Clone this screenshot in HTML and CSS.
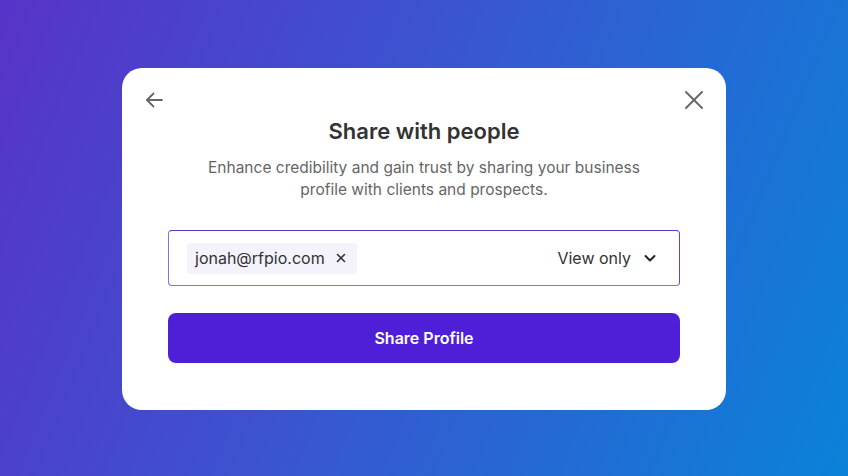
FILE: index.html
```html
<!DOCTYPE html>
<html lang="en">
<head>
    <meta charset="UTF-8">
    <meta name="viewport" content="width=device-width, initial-scale=1.0">
    <title>Share with people</title>
    <link rel="stylesheet" href="styles.css">
</head>
<body>

    <div class="stage">
        <div class="card">
            <!-- Top bar: back + close -->
            <div class="top-bar">
                <button class="icon-btn" aria-label="Back">
                    <svg width="20" height="20" viewBox="0 0 20 20" fill="none" stroke="#666" stroke-width="1.8" stroke-linecap="round" stroke-linejoin="round">
                        <path d="M18 10H3"/>
                        <path d="M9.5 3.5L3 10l6.5 6.5"/>
                    </svg>
                </button>
                <button class="icon-btn" aria-label="Close">
                    <svg width="20" height="20" viewBox="0 0 20 20" fill="none" stroke="#666" stroke-width="1.9" stroke-linecap="round">
                        <path d="M2 2l16 16"/>
                        <path d="M18 2L2 18"/>
                    </svg>
                </button>
            </div>

            <h1 class="title">Share with people</h1>
            <p class="desc">Enhance credibility and gain trust by sharing your business<br>profile with clients and prospects.</p>

            <!-- Email field -->
            <div class="email-field">
                <span class="chip">
                    jonah@rfpio.com
                    <svg class="chip-x" width="10" height="10" viewBox="0 0 10 10" stroke="#333" stroke-width="1.6" stroke-linecap="round">
                        <path d="M1.5 1.5l7 7"/>
                        <path d="M8.5 1.5l-7 7"/>
                    </svg>
                </span>
                <div class="access">
                    View only
                    <svg width="14" height="14" viewBox="0 0 14 14" fill="none" stroke="#222" stroke-width="2" stroke-linecap="round" stroke-linejoin="round">
                        <path d="M2.5 5l4.5 4.5L11.5 5"/>
                    </svg>
                </div>
            </div>

            <button class="share-btn">Share Profile</button>
        </div>
    </div>

</body>
</html>
```

FILE: styles.css
```css
body {
    font-family: Inter, "Noto Sans", Arial, sans-serif;
    margin: 0;
    padding: 0;
}

.stage {
    width: 848px;
    height: 476px;
    box-sizing: border-box;
    padding-top: 68px;
    background: linear-gradient(112deg, #5733c8 0%, #3a55d0 45%, #0a82d8 100%);
    display: flex;
    align-items: flex-start;
    justify-content: center;
}

.card {
    width: 604px;
    height: 342px;
    box-sizing: border-box;
    background-color: white;
    border-radius: 20px;
    padding: 22px 46px 0;
    display: flex;
    flex-direction: column;
}

.top-bar {
    display: flex;
    justify-content: space-between;
    margin: 0 -24px;
    height: 20px;
}

.icon-btn {
    width: 20px;
    height: 20px;
    padding: 0;
    border: none;
    background: none;
    cursor: pointer;
    display: flex;
}

.title {
    margin: 7px 0 0;
    font-size: 22px;
    line-height: 28px;
    font-weight: 600;
    color: #333;
    text-align: center;
}

.desc {
    margin: 12px 0 0;
    font-size: 15.5px;
    line-height: 22px;
    color: #666;
    text-align: center;
}

.email-field {
    margin-top: 29px;
    height: 56px;
    box-sizing: border-box;
    border: 1px solid #8a6edf;
    border-top-color: #5535c9;
    border-right-color: #6445d2;
    border-radius: 4px;
    padding: 0 22px 0 18px;
    display: flex;
    align-items: center;
    justify-content: space-between;
}

.chip {
    display: flex;
    align-items: center;
    gap: 11px;
    height: 31px;
    padding: 0 11px 0 8px;
    background-color: #f4f2fb;
    border-radius: 4px;
    font-size: 16px;
    color: #333;
}

.access {
    display: flex;
    align-items: center;
    gap: 12px;
    font-size: 16px;
    color: #333;
}

.share-btn {
    margin-top: 27px;
    height: 50px;
    border: none;
    border-radius: 8px;
    background-color: #4f1fd8;
    color: white;
    font-family: inherit;
    font-size: 16px;
    font-weight: 600;
    cursor: pointer;
}

.share-btn:hover {
    background-color: #4418c4;
}
```
